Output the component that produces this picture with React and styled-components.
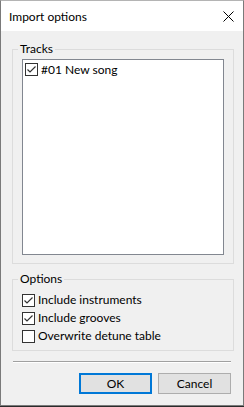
import React from 'react';
import styled, { createGlobalStyle } from 'styled-components';

const Global = createGlobalStyle`
  html, body {
    margin: 0;
    padding: 0;
    background: #2b2b2b;
  }
  * {
    box-sizing: border-box;
  }
`;

const Window = styled.div`
  width: 244px;
  height: 406px;
  display: flex;
  flex-direction: column;
  background: #f0f0f0;
  border: 1px solid #7a7a7a;
  border-top-color: #b4b4b4;

  font-family: "Segoe UI", Lato, "Noto Sans", sans-serif;
  font-size: 12px;
  line-height: 16px;
  color: #000;
`;

const TitleBar = styled.div`
  height: 30px;
  flex-shrink: 0;
  display: flex;
  align-items: center;
  justify-content: space-between;
  padding: 0 9px 0 8px;
  background: #fff;

  span {
    padding-top: 1px;
  }
`;

const Client = styled.div`
  flex: 1;
  display: flex;
  flex-direction: column;
  padding: 10px 9px 0 11px;
`;

const Group = styled.fieldset`
  margin: ${(p) => p.$top || 0}px 0 0 0;
  padding: ${(p) => p.$pad};
  border: 1px solid #dcdcdc;
  min-width: 0;

  legend {
    padding: 0 2px;
    margin-left: -4px;
    line-height: 16px;
  }
`;

const ListBox = styled.div`
  height: 196px;
  background: #fff;
  border: 1px solid #828790;
  padding: 3px 0 0 2px;
`;

const Row = styled.label`
  display: flex;
  align-items: center;
  gap: ${(p) => p.$gap || 3}px;
  height: ${(p) => p.$h || 18}px;
  white-space: nowrap;
`;

const Box = styled.span`
  width: 13px;
  height: 13px;
  flex-shrink: 0;
  display: flex;
  background: #fff;
  border: 1px solid #333;
`;

const Separator = styled.div`
  margin: 10px 3px 0 1px;
  height: 2px;
  border-top: 1px solid #a0a0a0;
  border-bottom: 1px solid #fff;
`;

const Buttons = styled.div`
  display: flex;
  justify-content: flex-end;
  gap: 6px;
  margin: 10px 3px 0 0;
`;

const Button = styled.button`
  width: 73px;
  height: 21px;
  padding: 0;
  font: inherit;
  color: #000;
  background: #e1e1e1;
  border: ${(p) => (p.$default ? '2px solid #0078d7' : '1px solid #adadad')};
`;

function Check({ checked }) {
  return (
    <Box>
      {checked && (
        <svg width="11" height="11" viewBox="0 0 11 11">
          <polyline
            points="1.5,5.5 4,8 9.5,2.5"
            fill="none"
            stroke="#333"
            strokeWidth="1.2"
          />
        </svg>
      )}
    </Box>
  );
}

export default function App() {
  const options = [
    { label: 'Include instruments', checked: true },
    { label: 'Include grooves', checked: true },
    { label: 'Overwrite detune table', checked: false },
  ];

  return (
    <>
      <Global />
      <Window>
        <TitleBar>
          <span>Import options</span>
          <svg width="11" height="11" viewBox="0 0 11 11">
            <path d="M0.5 0.5 L10.5 10.5 M10.5 0.5 L0.5 10.5" stroke="#000" strokeWidth="1" />
          </svg>
        </TitleBar>
        <Client>
          <Group $pad="2px 9px 8px 9px">
            <legend>Tracks</legend>
            <ListBox>
              <Row $h={13} $gap={3}>
                <Check checked />
                <span>#01 New song</span>
              </Row>
            </ListBox>
          </Group>
          <Group $top={7} $pad="4px 9px 5px 9px">
            <legend>Options</legend>
            {options.map((o) => (
              <Row key={o.label}>
                <Check checked={o.checked} />
                <span>{o.label}</span>
              </Row>
            ))}
          </Group>
          <Separator />
          <Buttons>
            <Button $default>OK</Button>
            <Button>Cancel</Button>
          </Buttons>
        </Client>
      </Window>
    </>
  );
}
